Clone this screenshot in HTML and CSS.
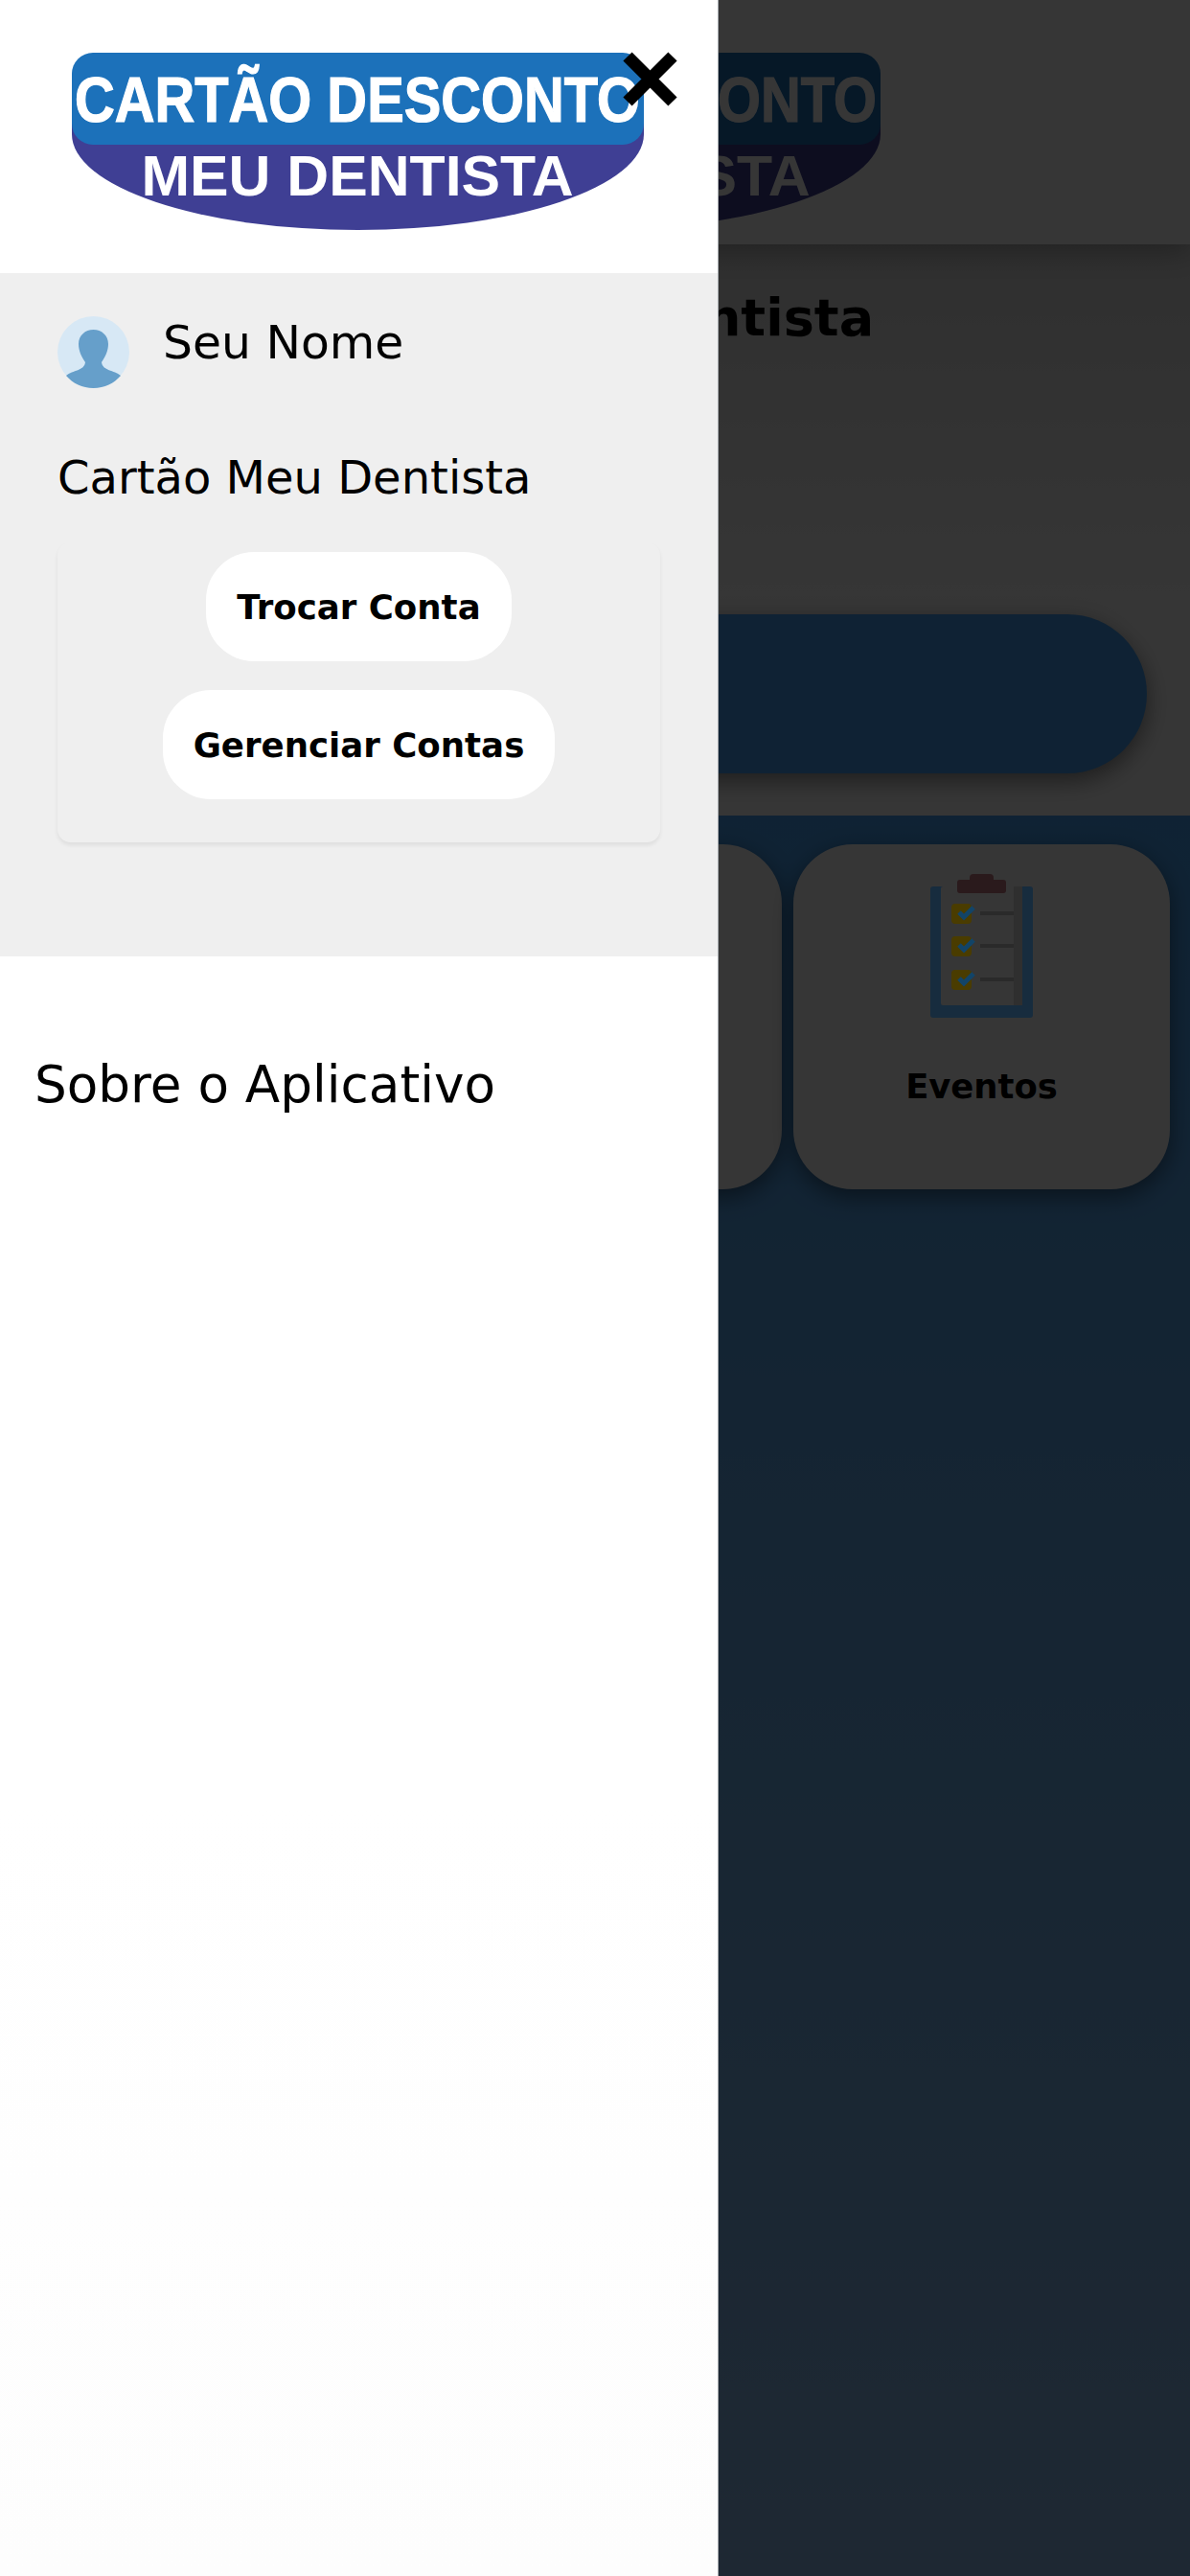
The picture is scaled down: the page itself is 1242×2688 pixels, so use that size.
FILE: index.html
```html
<!DOCTYPE html>
<html lang="en">

<head>
  <meta charset="UTF-8">
  <meta name="viewport" content="width=device-width, initial-scale=1.0">
  <title>Cartão Meu Dentista</title>

  <link rel="stylesheet" href="styles.css">
</head>

<body>
  <main class="page">
    <header class="page-head">
      <svg class="logo" viewBox="0 0 597 185">
        <path d="M0 50 H597 V85 A298.5 100 0 0 1 0 85 Z" fill="#3f3f94" />
        <rect width="597" height="96" rx="22" fill="#1c71ba" />
        <text class="logo-top" x="298" y="72" text-anchor="middle" textLength="590" lengthAdjust="spacingAndGlyphs">CARTÃO DESCONTO</text>
        <text class="logo-bottom" x="298" y="149" text-anchor="middle" textLength="451" lengthAdjust="spacingAndGlyphs">MEU DENTISTA</text>
      </svg>
    </header>
    <section class="intro">
      <h1>Cartão Meu Dentista</h1>
      <div class="pill"></div>
    </section>
    <section class="services">
      <div class="service"></div>
      <div class="service">
        <svg class="clipboard" viewBox="0 0 107 150">
          <rect x="0" y="13" width="107" height="137" rx="3" fill="#172c3e" />
          <rect x="11" y="13" width="85" height="124" rx="2" fill="#363636" />
          <rect x="87" y="13" width="9" height="124" fill="#2f2f2f" />
          <rect x="41" y="0" width="25" height="12" rx="4" fill="#2a1a1c" />
          <rect x="28" y="6" width="51" height="14" rx="3" fill="#2a1a1c" />
          <rect x="22" y="31" width="21" height="21" rx="4" fill="#4a3c00" />
          <rect x="22" y="65" width="21" height="21" rx="4" fill="#4a3c00" />
          <rect x="22" y="100" width="21" height="21" rx="4" fill="#4a3c00" />
          <path class="tick" d="M30 40 L35 45 L45 35 M30 74 L35 79 L45 69 M30 109 L35 114 L45 104" />
          <path class="dash" d="M52 41 H87 M52 75 H87 M52 110 H87" />
        </svg>
        <span class="service-label">Eventos</span>
      </div>
    </section>
  </main>

  <div class="overlay"></div>

  <nav class="drawer">
    <div class="drawer-head">
      <svg class="logo" viewBox="0 0 597 185">
        <path d="M0 50 H597 V85 A298.5 100 0 0 1 0 85 Z" fill="#3f3f94" />
        <rect width="597" height="96" rx="22" fill="#1c71ba" />
        <text class="logo-top" x="298" y="72" text-anchor="middle" textLength="590" lengthAdjust="spacingAndGlyphs">CARTÃO DESCONTO</text>
        <text class="logo-bottom" x="298" y="149" text-anchor="middle" textLength="451" lengthAdjust="spacingAndGlyphs">MEU DENTISTA</text>
      </svg>
      <svg class="close" viewBox="0 0 57 57">
        <path d="M5 5 L52 52 M52 5 L5 52" />
      </svg>
    </div>

    <div class="account">
      <div class="profile">
        <svg class="avatar" viewBox="0 0 75 75">
          <circle cx="37.5" cy="37.5" r="37.5" fill="#d7e8f5" />
          <path d="M9 62 C16 56 28 57 29 48 C25 42 22 36 22 29 C22 20 29 14 37.5 14 C46 14 53 20 53 29 C53 36 50 42 46 48 C47 57 59 56 66 62 C59 70 49 75 37.5 75 C26 75 16 70 9 62 Z" fill="#669fca" />
        </svg>
        <span class="profile-name">Seu Nome</span>
      </div>
      <p class="account-name">Cartão Meu Dentista</p>
      <div class="account-card">
        <button class="account-btn">Trocar Conta</button>
        <button class="account-btn">Gerenciar Contas</button>
      </div>
    </div>

    <a class="drawer-link">Sobre o Aplicativo</a>
  </nav>
</body>

</html>
```

FILE: styles.css
```css
* {
  box-sizing: border-box;
}

html,
body {
  margin: 0;
  height: 2688px;
  overflow: hidden;
}

body {
  font-family: "DejaVu Sans", sans-serif;
  color: #000;
  position: relative;
  width: 1242px;
}

.logo {
  display: block;
  width: 597px;
  height: 185px;
}

.logo-top,
.logo-bottom {
  font-family: "Liberation Sans", sans-serif;
  font-weight: bold;
  fill: #fff;
}

.logo-top {
  font-size: 66px;
  stroke: #fff;
  stroke-width: 1.2;
}

.logo-bottom {
  font-size: 60px;
}

/* page behind the drawer */
.page {
  display: flex;
  flex-direction: column;
  height: 2688px;
}

.page-head {
  background: #fff;
  box-shadow: 0 6px 30px rgba(0, 0, 0, 0.3);
  display: flex;
  height: 255px;
  padding: 55px 0 0 322px;
  position: relative;
}

.intro {
  background: linear-gradient(#dedede, #fff 400px);
  display: flex;
  flex-direction: column;
  height: 596px;
  padding: 45px 45px 0;
}

.intro h1 {
  font-size: 54px;
  font-weight: bold;
  line-height: 63px;
  margin: 0 0 278px 240px;
}

.pill {
  background: #47a2f3;
  border-radius: 83px;
  box-shadow: 0 8px 24px rgba(0, 0, 0, 0.45);
  height: 166px;
}

.services {
  background: linear-gradient(#47a2f3, #8fbeee);
  column-gap: 12px;
  display: grid;
  flex: 1;
  grid-auto-rows: 360px;
  grid-template-columns: 393px 393px;
  justify-content: end;
  padding: 30px 21px 0 0;
}

.service {
  align-items: center;
  background: #fff;
  border-radius: 62px;
  box-shadow: 0 8px 24px rgba(0, 0, 0, 0.45);
  display: flex;
  flex-direction: column;
  padding-top: 31px;
}

/* the icon keeps its colours brighter than the dim layer allows */
.clipboard {
  height: 150px;
  position: relative;
  width: 107px;
  z-index: 1;
}

.tick {
  fill: none;
  stroke: #124468;
  stroke-width: 5;
}

.dash {
  fill: none;
  stroke: #2a2a2a;
  stroke-width: 4;
}

.service-label {
  font-size: 35.4px;
  font-weight: bold;
  margin-top: 51px;
}

.overlay {
  background: rgba(0, 0, 0, 0.79);
  inset: 0;
  position: absolute;
}

/* drawer */
.drawer {
  background: linear-gradient(#fff 70%, #fdfdfd);
  border-right: 1px solid #a6aaae;
  display: flex;
  flex-direction: column;
  height: 2688px;
  left: 0;
  position: absolute;
  top: 0;
  width: 750px;
  z-index: 2;
}

.drawer-head {
  height: 285px;
  padding: 55px 0 0 75px;
  position: relative;
}

.close {
  fill: none;
  height: 57px;
  left: 650px;
  position: absolute;
  stroke: #000;
  stroke-width: 13;
  top: 54px;
  width: 57px;
}

.account {
  background: #efefef;
  display: flex;
  flex-direction: column;
  height: 713px;
  padding: 45px 60px 0 60px;
}

.profile {
  align-items: flex-start;
  display: flex;
  gap: 35px;
}

.avatar {
  flex: none;
  height: 75px;
  width: 75px;
}

.profile-name {
  font-size: 48.8px;
  line-height: 60px;
  margin-top: -2px;
}

.account-name {
  font-size: 48px;
  line-height: 60px;
  margin: 63px 0 38px;
}

.account-card {
  align-items: center;
  border-radius: 14px;
  box-shadow: 0 3px 4px rgba(0, 0, 0, 0.07);
  display: flex;
  flex-direction: column;
  gap: 30px;
  height: 313px;
  padding-top: 10px;
}

.account-btn {
  background: #fff;
  border: 0;
  border-radius: 50px;
  color: #000;
  font-family: inherit;
  font-size: 35.6px;
  font-weight: bold;
  height: 114px;
  padding: 0 32px;
}

.drawer-link {
  font-size: 53.2px;
  line-height: 64px;
  margin: 102px 0 0 36px;
}
```
